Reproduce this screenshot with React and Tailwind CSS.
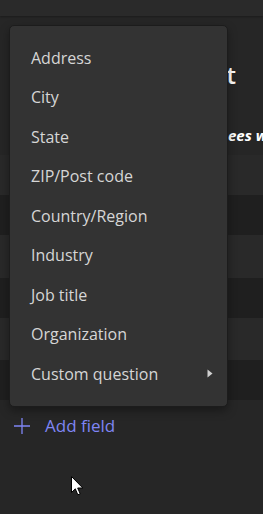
import React from "react";

const items = [
  "Address",
  "City",
  "State",
  "ZIP/Post code",
  "Country/Region",
  "Industry",
  "Job title",
  "Organization",
  "Custom question",
];

export default function App() {
  return (
    <div
      className="relative w-[263px] h-[514px] overflow-hidden bg-[#262626]"
      style={{ fontFamily: '"Open Sans", "Noto Sans", sans-serif' }}
    >
      {/* top bar */}
      <div className="h-4 bg-[#2a2a2a] shadow-[0_1px_2px_rgba(0,0,0,0.3)]" />

      {/* background page content */}
      <div className="pt-[44px]">
        <div className="w-[236px] text-right text-[24px] font-semibold leading-[30px] text-white">
          event
        </div>
        <div className="mt-[35px] w-[263px] overflow-hidden pl-[228px] whitespace-nowrap text-[15px] font-bold italic leading-5 text-white">
          ees w
        </div>
        <div className="mt-[10px] flex flex-col">
          <div className="h-[40px] bg-[#292929]" />
          <div className="h-[40px] bg-[#1f1f1f]" />
          <div className="h-[43px] bg-[#292929]" />
          <div className="h-[40px] bg-[#1f1f1f]" />
          <div className="h-[42px] bg-[#292929]" />
          <div className="h-[40px] bg-[#1f1f1f]" />
        </div>
        <div className="mt-[16px] flex items-center pl-[13px]">
          <svg width="18" height="18" viewBox="0 0 18 18" className="text-[#7f85f5]">
            <path d="M9 1v16M1 9h16" stroke="currentColor" strokeWidth="1.3" />
          </svg>
          <span className="ml-[14px] text-[17px] leading-5 text-[#7f85f5]">Add field</span>
        </div>
      </div>

      {/* dropdown menu */}
      <div className="absolute left-[9px] top-[25px] w-[219px] rounded-[5px] border border-[#1c1c1c] bg-[#333333] py-3 shadow-[0_4px_10px_rgba(0,0,0,0.35)]">
        {items.map((t, i) => (
          <div
            key={t}
            className="flex h-[39.5px] items-center justify-between pl-[21px] pr-[14px] text-[16px] text-[#d6d6d6]"
          >
            <span>{t}</span>
            {i === items.length - 1 && (
              <svg width="6" height="9" viewBox="0 0 6 9">
                <path d="M0.5 0.5L5.5 4.5L0.5 8.5Z" fill="#d0d0d0" />
              </svg>
            )}
          </div>
        ))}
      </div>

      {/* mouse cursor */}
      <svg
        className="absolute left-[71px] top-[476px]"
        width="13"
        height="20"
        viewBox="0 0 13 20"
      >
        <path
          d="M0.5 0.5V16.5L4.3 12.8L6.8 18.8L9.2 17.8L6.7 12H11.8Z"
          fill="#ffffff"
          stroke="#000000"
          strokeWidth="1"
          strokeLinejoin="round"
        />
      </svg>
    </div>
  );
}
